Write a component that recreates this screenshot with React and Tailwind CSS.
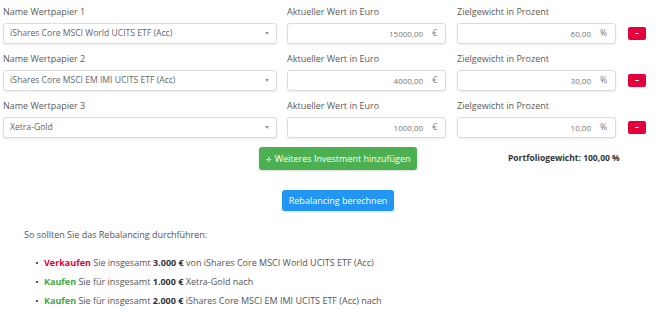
import React from "react";

const rows = [
  { label: "Name Wertpapier 1", name: "iShares Core MSCI World UCITS ETF (Acc)", value: "15000,00", pct: "60,00" },
  { label: "Name Wertpapier 2", name: "iShares Core MSCI EM IMI UCITS ETF (Acc)", value: "4000,00", pct: "30,00" },
  { label: "Name Wertpapier 3", name: "Xetra-Gold", value: "1000,00", pct: "10,00" },
];

function Row({ r }) {
  return (
    <div className="flex items-end">
      <div className="w-[274px] flex flex-col">
        <div className="h-[14px] text-[9px] leading-[14px] text-[#5a5a5a]">{r.label}</div>
        <div className="mt-[4px] h-[21px] rounded-[3px] border border-[#dcdcdc] shadow-[0_1px_2px_rgba(0,0,0,0.08)] bg-white flex items-center pl-[6px] pr-[7px]">
          <span className="flex-1 text-[8.6px] text-[#666]">{r.name}</span>
          <span className="w-0 h-0 border-l-[2.5px] border-r-[2.5px] border-t-[3px] border-l-transparent border-r-transparent border-t-[#999]"></span>
        </div>
      </div>
      <div className="ml-[10px] w-[159px] flex flex-col">
        <div className="h-[14px] text-[9px] leading-[14px] text-[#5a5a5a]">Aktueller Wert in Euro</div>
        <div className="mt-[4px] h-[21px] rounded-[3px] border border-[#dcdcdc] shadow-[0_1px_2px_rgba(0,0,0,0.08)] bg-white flex items-center justify-end pr-[8px]">
          <span className="text-[8px] text-[#777]">{r.value}</span>
          <span className="ml-[9px] text-[8.5px] text-[#777]">€</span>
        </div>
      </div>
      <div className="ml-[11px] w-[159px] flex flex-col">
        <div className="h-[14px] text-[9px] leading-[14px] text-[#5a5a5a]">Zielgewicht in Prozent</div>
        <div className="mt-[4px] h-[21px] rounded-[3px] border border-[#dcdcdc] shadow-[0_1px_2px_rgba(0,0,0,0.08)] bg-white flex items-center justify-end pr-[8px]">
          <span className="text-[8px] text-[#777]">{r.pct}</span>
          <span className="ml-[9px] text-[8.5px] text-[#777]">%</span>
        </div>
      </div>
      <div className="ml-[12px] mb-[4px] w-[18px] h-[13px] rounded-[2px] bg-[#e4003b] flex items-center justify-center">
        <span className="block w-[4px] h-[1px] bg-white"></span>
      </div>
    </div>
  );
}

export default function App() {
  return (
    <div className="w-[661px] h-[316px] bg-white overflow-hidden pl-[3px] pt-[5px]" style={{ fontFamily: '"Open Sans", sans-serif' }}>
      <div className="flex flex-col gap-[8px]">
        {rows.map((r) => (
          <Row key={r.label} r={r} />
        ))}
      </div>
      <div className="flex items-center mt-[9px]">
        <div className="ml-[256px] w-[158px] h-[23px] rounded-[3px] bg-[#4caf50] shadow-[0_1px_2px_rgba(0,0,0,0.15)] flex items-center justify-center text-white text-[9px]">
          <span className="text-[11px] leading-none mr-[3px]">+</span>Weiteres Investment hinzufügen
        </div>
        <div className="ml-[91px] text-[8.5px] font-bold text-[#333]">Portfoliogewicht: 100,00 %</div>
      </div>
      <div className="mt-[20px] ml-[279px] w-[112px] h-[21px] rounded-[3px] bg-[#2196f3] shadow-[0_1px_2px_rgba(0,0,0,0.15)] flex items-center justify-center text-white text-[9px]">
        Rebalancing berechnen
      </div>
      <div className="ml-[21px] mt-[17px] text-[9px] text-[#555]">So sollten Sie das Rebalancing durchführen:</div>
      <ul className="ml-[33px] mt-[14px] flex flex-col gap-[6px] text-[9px] text-[#555]">
        <li className="flex items-center leading-[13px]">
          <span className="w-[2px] h-[2px] bg-[#555] mr-[6px] mt-[1px]"></span>
          <span><b className="text-[#e4003b]">Verkaufen</b> Sie insgesamt <b className="text-[#333]">3.000 €</b> von iShares Core MSCI World UCITS ETF (Acc)</span>
        </li>
        <li className="flex items-center leading-[13px]">
          <span className="w-[2px] h-[2px] bg-[#555] mr-[6px] mt-[1px]"></span>
          <span><b className="text-[#43a843]">Kaufen</b> Sie für insgesamt <b className="text-[#333]">1.000 €</b> Xetra-Gold nach</span>
        </li>
        <li className="flex items-center leading-[13px]">
          <span className="w-[2px] h-[2px] bg-[#555] mr-[6px] mt-[1px]"></span>
          <span><b className="text-[#43a843]">Kaufen</b> Sie für insgesamt <b className="text-[#333]">2.000 €</b> iShares Core MSCI EM IMI UCITS ETF (Acc) nach</span>
        </li>
      </ul>
    </div>
  );
}
